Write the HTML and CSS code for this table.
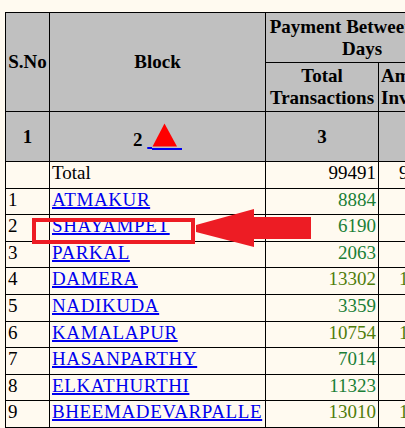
FILE: index.html
```html
<!DOCTYPE html>
<html>
<head>
<meta charset="utf-8">
<title>Report</title>
<link rel="stylesheet" href="styles.css">
</head>
<body>
<div class="page">
  <table class="report">
    <colgroup>
      <col class="c1"><col class="c2"><col class="c3"><col class="c4">
    </colgroup>
    <thead>
      <tr class="h1">
        <th rowspan="2">S.No</th>
        <th rowspan="2">Block</th>
        <th colspan="2" class="nowrap">Payment Between 8-15<br>Days</th>
      </tr>
      <tr class="h2">
        <th>Total Transactions</th>
        <th class="left">Amount Involved</th>
      </tr>
      <tr class="h3">
        <th>1</th>
        <th>2 <a href="#" class="sort">&nbsp;<svg class="tri" width="30" height="27" viewBox="0 0 30 27"><polygon points="0.5,23.5 12.5,0.5 25,23.5" fill="#ff0000"/><rect x="0" y="25" width="30" height="2" fill="#0000ee"/></svg></a></th>
        <th>3</th>
        <th>4</th>
      </tr>
    </thead>
    <tbody>
      <tr><td></td><td>Total</td><td class="num">99491</td><td class="num">987654</td></tr>
      <tr><td>1</td><td><a href="#">ATMAKUR</a></td><td class="num g">8884</td><td class="num g">88412</td></tr>
      <tr><td>2</td><td><a href="#">SHAYAMPET</a></td><td class="num g">6190</td><td class="num g">61524</td></tr>
      <tr><td>3</td><td><a href="#">PARKAL</a></td><td class="num g">2063</td><td class="num g">20487</td></tr>
      <tr><td>4</td><td><a href="#">DAMERA</a></td><td class="num o">13302</td><td class="num o">132145</td></tr>
      <tr><td>5</td><td><a href="#">NADIKUDA</a></td><td class="num g">3359</td><td class="num g">33412</td></tr>
      <tr><td>6</td><td><a href="#">KAMALAPUR</a></td><td class="num o">10754</td><td class="num o">107215</td></tr>
      <tr><td>7</td><td><a href="#">HASANPARTHY</a></td><td class="num g">7014</td><td class="num g">69875</td></tr>
      <tr><td>8</td><td><a href="#">ELKATHURTHI</a></td><td class="num g">11323</td><td class="num g">98760</td></tr>
      <tr><td>9</td><td><a href="#">BHEEMADEVARPALLE</a></td><td class="num o">13010</td><td class="num o">129870</td></tr>
      <tr><td>10</td><td><a href="#">DHARMASAGAR</a></td><td class="num g">12592</td><td class="num g">125014</td></tr>
    </tbody>
  </table>
  <svg class="callout" width="405" height="428" viewBox="0 0 405 428">
    <rect x="34" y="220" width="159" height="22" fill="none" stroke="#ed1c24" stroke-width="4"/>
    <polygon points="196,225 254,209 254,217 311,217 311,239 254,239 254,247 196,232" fill="#ed1c24"/>
  </svg>
</div>
</body>
</html>
```
FILE: styles.css
```css
html, body {
  margin: 0;
  padding: 0;
  background: #fffaf0;
  overflow: hidden;
}
body {
  font-family: "Liberation Serif", "Times New Roman", serif;
  font-size: 19px;
  color: #000;
}
.page {
  position: relative;
  width: 405px;
  height: 428px;
  overflow: hidden;
  padding: 12px 0 0 5px;
  box-sizing: border-box;
}
.report {
  border-collapse: collapse;
  table-layout: fixed;
  width: 453px;
}
.c1 { width: 44px; }
.c2 { width: 216px; }
.c3 { width: 113px; }
.c4 { width: 80px; }
.report th,
.report td {
  border: 1px solid #000;
}
.report th {
  background: #c0c0c0;
  font-weight: bold;
  line-height: 22px;
  padding: 2px;
  text-align: center;
  vertical-align: middle;
}
.report th.nowrap { white-space: nowrap; }
.report th.left { text-align: left; }
.report tr.h1 { height: 50px; }
.report tr.h3 { height: 50px; }
.report td {
  line-height: 21.6px;
  padding: 0 2px 4px;
  white-space: nowrap;
}
.report a {
  color: #0000ee;
  text-decoration-thickness: 2px;
}
.report td a { letter-spacing: 0.6px; }
.report .num { text-align: right; }
.report .g { color: #1a7f37; }
.report .o { color: #4f7d0a; }
.tri { vertical-align: -4px; }
.callout {
  position: absolute;
  left: 0;
  top: 0;
  pointer-events: none;
}
```
